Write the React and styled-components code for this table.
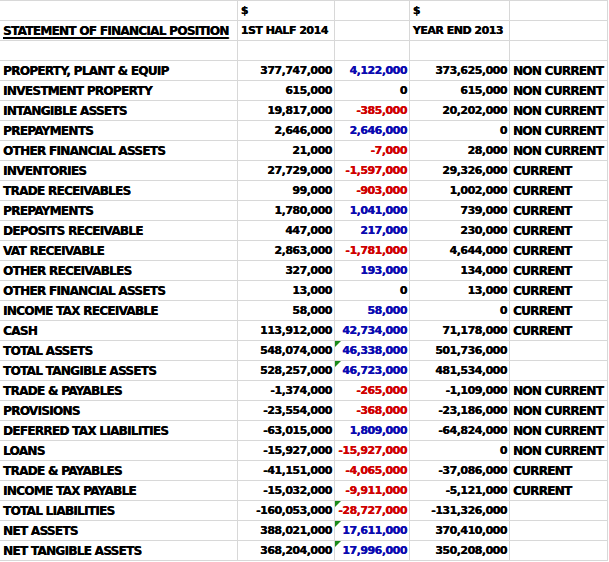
import React from 'react';
import styled, { createGlobalStyle } from 'styled-components';

const GlobalStyle = createGlobalStyle`
    body {
        margin: 0;
        background: #ffffff;
    }
`;

const rows = [
    ['PROPERTY, PLANT & EQUIP', '377,747,000', '4,122,000', '373,625,000', 'NON CURRENT'],
    ['INVESTMENT PROPERTY', '615,000', '0', '615,000', 'NON CURRENT'],
    ['INTANGIBLE ASSETS', '19,817,000', '-385,000', '20,202,000', 'NON CURRENT'],
    ['PREPAYMENTS', '2,646,000', '2,646,000', '0', 'NON CURRENT'],
    ['OTHER FINANCIAL ASSETS', '21,000', '-7,000', '28,000', 'NON CURRENT'],
    ['INVENTORIES', '27,729,000', '-1,597,000', '29,326,000', 'CURRENT'],
    ['TRADE RECEIVABLES', '99,000', '-903,000', '1,002,000', 'CURRENT'],
    ['PREPAYMENTS', '1,780,000', '1,041,000', '739,000', 'CURRENT'],
    ['DEPOSITS RECEIVABLE', '447,000', '217,000', '230,000', 'CURRENT'],
    ['VAT RECEIVABLE', '2,863,000', '-1,781,000', '4,644,000', 'CURRENT'],
    ['OTHER RECEIVABLES', '327,000', '193,000', '134,000', 'CURRENT'],
    ['OTHER FINANCIAL ASSETS', '13,000', '0', '13,000', 'CURRENT'],
    ['INCOME TAX RECEIVABLE', '58,000', '58,000', '0', 'CURRENT'],
    ['CASH', '113,912,000', '42,734,000', '71,178,000', 'CURRENT'],
    ['TOTAL ASSETS', '548,074,000', '46,338,000', '501,736,000', '', true],
    ['TOTAL TANGIBLE ASSETS', '528,257,000', '46,723,000', '481,534,000', '', true],
    ['TRADE & PAYABLES', '-1,374,000', '-265,000', '-1,109,000', 'NON CURRENT'],
    ['PROVISIONS', '-23,554,000', '-368,000', '-23,186,000', 'NON CURRENT'],
    ['DEFERRED TAX LIABILITIES', '-63,015,000', '1,809,000', '-64,824,000', 'NON CURRENT'],
    ['LOANS', '-15,927,000', '-15,927,000', '0', 'NON CURRENT'],
    ['TRADE & PAYABLES', '-41,151,000', '-4,065,000', '-37,086,000', 'CURRENT'],
    ['INCOME TAX PAYABLE', '-15,032,000', '-9,911,000', '-5,121,000', 'CURRENT'],
    ['TOTAL LIABILITIES', '-160,053,000', '-28,727,000', '-131,326,000', '', true],
    ['NET ASSETS', '388,021,000', '17,611,000', '370,410,000', '', true],
    ['NET TANGIBLE ASSETS', '368,204,000', '17,996,000', '350,208,000', '', true],
];

const toneOf = value => {
    if (value === '0') return 'plain';
    return value.startsWith('-') ? 'loss' : 'gain';
};

const App = () => (
    <>
        <GlobalStyle />
        <Sheet>
            <colgroup>
                <col style={{ width: 237 }} />
                <col style={{ width: 97 }} />
                <col style={{ width: 75 }} />
                <col style={{ width: 100 }} />
                <col style={{ width: 98 }} />
            </colgroup>
            <tbody>
                <tr>
                    <Cell />
                    <Cell>$</Cell>
                    <Cell />
                    <Cell>$</Cell>
                    <Cell />
                </tr>
                <tr>
                    <Cell $label>
                        <Title>STATEMENT OF FINANCIAL POSITION</Title>
                    </Cell>
                    <Cell>1ST HALF 2014</Cell>
                    <Cell />
                    <Cell>YEAR END 2013</Cell>
                    <Cell />
                </tr>
                <tr>
                    <Cell />
                    <Cell />
                    <Cell />
                    <Cell />
                    <Cell />
                </tr>
                {rows.map(([label, half, change, yearEnd, kind, flagged], i) => (
                    <tr key={i}>
                        <Cell $label>{label}</Cell>
                        <Cell $num>{half}</Cell>
                        <Cell $num $tone={toneOf(change)} $flag={flagged}>
                            {change}
                        </Cell>
                        <Cell $num>{yearEnd}</Cell>
                        <Cell $label>{kind}</Cell>
                    </tr>
                ))}
            </tbody>
        </Sheet>
    </>
);

export default App;

const tones = {
    plain: '#000000',
    gain: '#0a0ab0',
    loss: '#d00000',
};

const Sheet = styled.table`
    border-collapse: collapse;
    table-layout: fixed;
    width: 608px;
    border-top: 1px solid #d8d8d8;
    font-family: 'DejaVu Sans', sans-serif;
    font-weight: bold;
    color: #000;
`;

const Cell = styled.td`
    position: relative;
    height: 18px;
    padding: 1px 2px 0 3px;
    border-right: 1px solid #d8d8d8;
    border-bottom: 1px solid #d8d8d8;
    white-space: nowrap;
    overflow: hidden;
    line-height: 18px;
    font-size: ${p => (p.$label ? '12px' : '11px')};
    letter-spacing: ${p => (p.$label ? '-0.7px' : '-0.5px')};
    text-align: ${p => (p.$num ? 'right' : 'left')};
    color: ${p => tones[p.$tone] || '#000'};
    text-shadow: 0.3px 0 0 currentColor;

    ${p =>
        p.$flag &&
        `
        &::before {
            content: '';
            position: absolute;
            top: 0;
            left: 0;
            border-top: 6px solid #1a8a1a;
            border-right: 6px solid transparent;
        }
    `}
`;

const Title = styled.span`
    text-decoration: underline;
    text-decoration-thickness: 1.5px;
    text-underline-offset: 2px;
`;
